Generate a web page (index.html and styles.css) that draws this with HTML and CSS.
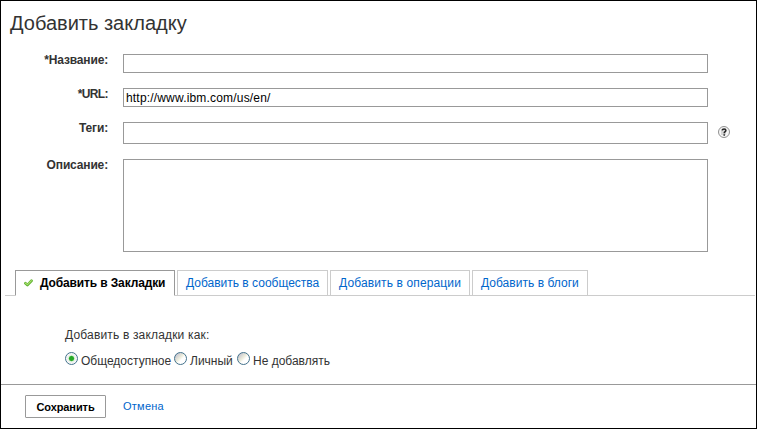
FILE: index.html
```
<!DOCTYPE html>
<html lang="ru">
<head>
<meta charset="utf-8">
<title>Добавить закладку</title>
<link rel="stylesheet" href="styles.css">
</head>
<body>
<form class="dialog">
  <h1 class="title">Добавить закладку</h1>
  <div class="fields">
    <label class="label label-name" for="name">*Название:</label>
    <input class="field" id="name" type="text">
    <span></span>
    <label class="label label-url" for="url">*URL:</label>
    <input class="field" id="url" type="text" value="http://www.ibm.com/us/en/">
    <span></span>
    <label class="label label-tags" for="tags">Теги:</label>
    <input class="field" id="tags" type="text">
    <svg class="help" viewBox="0 0 12 12" width="12" height="12">
      <circle cx="6" cy="6" r="5.5" fill="#f6f6f6" stroke="#909090"/>
      <path d="M3 3h5v6h-5z" fill="#d6d6d6"/>
      <path d="M4.2 4.4C4.4 2.5 7.9 2.5 7.9 4.4C7.9 5.8 6.2 5.6 6.2 7.3M6.2 8.2v1.5" fill="none" stroke="#222" stroke-width="1.5"/>
    </svg>
    <label class="label label-desc" for="desc">Описание:</label>
    <textarea class="field" id="desc"></textarea>
    <span></span>
  </div>
  <nav class="tabs">
    <a class="tab tab-active">
      <svg class="check" viewBox="0 0 9 8" width="9" height="8">
        <path d="M1.4 4.3L3.4 6.1L7.5 1.8" fill="none" stroke="#62b232" stroke-width="2.7" stroke-linecap="round" stroke-linejoin="round"/>
        <path d="M1.5 4.2L3.5 5.6L7.4 1.6" fill="none" stroke="#a9e070" stroke-width="1.1" stroke-linecap="round"/>
      </svg>
      <span>Добавить в Закладки</span>
    </a>
    <a class="tab tab-comm">Добавить в сообщества</a>
    <a class="tab tab-act">Добавить в операции</a>
    <a class="tab tab-blog">Добавить в блоги</a>
  </nav>
  <section class="panel">
    <p class="prompt">Добавить в закладки как:</p>
    <div class="options">
      <label class="option"><i class="radio radio-on"></i><span>Общедоступное</span></label>
      <label class="option"><i class="radio"></i><span>Личный</span></label>
      <label class="option"><i class="radio"></i><span>Не добавлять</span></label>
    </div>
  </section>
  <footer class="actions">
    <button class="save" type="button">Сохранить</button>
    <a class="cancel">Отмена</a>
  </footer>
</form>
</body>
</html>
```
FILE: styles.css
```
* { box-sizing: border-box; }
body {
  margin: 0;
  background: #fff;
  color: #333;
  font: 12px/16px "Liberation Sans", Arial, sans-serif;
}
.dialog {
  width: 757px;
  height: 429px;
  border: 1px solid #000;
  overflow: hidden;
}
.title {
  margin: 0;
  height: 53px;
  padding: 10px 0 0 9px;
  font-size: 20px;
  font-weight: normal;
  line-height: 24px;
}
.fields {
  display: grid;
  grid-template-columns: 122px 585px 1fr;
  grid-template-rows: 19px 19px 22px 93px;
  row-gap: 15px;
}
.label {
  padding-right: 15px;
  margin-top: -2px;
  font-weight: bold;
  text-align: right;
}
.label-name { letter-spacing: -0.15px; }
.label-url { letter-spacing: -0.6px; }
.label-tags { letter-spacing: -0.15px; }
.label-desc { letter-spacing: -0.15px; }
.field {
  width: 100%;
  height: 100%;
  margin: 0;
  padding: 0 2px;
  border: 1px solid #999;
  border-radius: 0;
  background: #fff;
  color: #000;
  font: inherit;
  resize: none;
  outline: none;
}
#url { letter-spacing: 0.18px; }
.help { margin: 4px 0 0 10px; }
.tabs {
  display: flex;
  gap: 2px;
  height: 26px;
  margin: 18px 1px 0 4px;
  padding-left: 10px;
  border-bottom: 1px solid #ccc;
}
.tab {
  display: flex;
  align-items: center;
  height: 26px;
  padding: 0 0 1px 8px;
  border: 1px solid #ccc;
  color: #0066cc;
  white-space: nowrap;
}
.tab-active {
  width: 160px;
  border-color: #999;
  border-bottom-color: #fff;
  color: #000;
  font-weight: bold;
  letter-spacing: -0.13px;
}
.check { margin-right: 7px; }
.tab-comm { width: 151px; }
.tab-act { width: 140px; letter-spacing: 0.13px; }
.tab-blog { width: 116px; letter-spacing: 0.03px; }
.panel {
  height: 88px;
  padding: 31px 0 0 64px;
}
.prompt { margin: 0 0 9px; letter-spacing: 0.17px; }
.options {
  display: grid;
  grid-template-columns: 109px 63px auto;
  justify-content: start;
  white-space: nowrap;
}
.option { display: flex; gap: 3px; }
.option span { padding-top: 1px; }
.radio {
  width: 13px;
  height: 13px;
  border: 1px solid #43728c;
  border-radius: 50%;
  background: linear-gradient(135deg, #c8c8d0 15%, #eeeede 45%, #fff 60%);
}
.radio-on {
  background: radial-gradient(circle, #27a827 0 2px, #7ad07a 2.6px, #e6f4e6 3.2px, #f0f0f0 4px, #fff 6px);
}
.actions {
  display: flex;
  align-items: flex-start;
  height: 44px;
  padding: 10px 0 0 24px;
  border-top: 1px solid #999;
}
.save {
  width: 81px;
  height: 23px;
  margin: 0;
  padding: 0;
  border: 1px solid #999;
  border-radius: 1px;
  background: #fff;
  color: #000;
  font: bold 11px/16px "Liberation Sans", Arial, sans-serif;
  letter-spacing: -0.08px;
  white-space: nowrap;
}
.cancel {
  margin: 3px 0 0 17px;
  color: #0066cc;
  font-size: 11px;
  letter-spacing: 0.25px;
}
```
